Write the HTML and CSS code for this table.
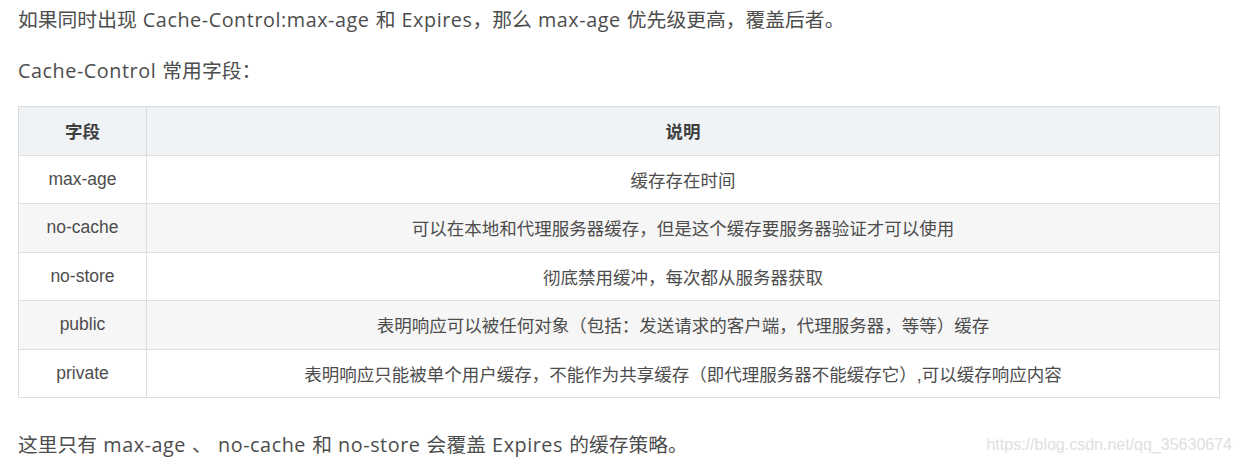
FILE: index.html
```html
<!DOCTYPE html>
<html lang="zh-CN">
<head>
<meta charset="utf-8">
<link rel="stylesheet" href="styles.css">
</head>
<body>
<main class="article">
  <p class="para">如果同时出现 <span class="latin">Cache-Control:max-age</span> 和 <span class="latin">Expires</span>，那么 <span class="latin">max-age</span> 优先级更高，覆盖后者。</p>
  <p class="para"><span class="latin">Cache-Control</span> 常用字段：</p>
  <table class="fields">
    <thead>
      <tr class="row"><th class="col-name">字段</th><th>说明</th></tr>
    </thead>
    <tbody>
      <tr class="row"><td>max-age</td><td>缓存存在时间</td></tr>
      <tr class="row alt"><td>no-cache</td><td>可以在本地和代理服务器缓存，但是这个缓存要服务器验证才可以使用</td></tr>
      <tr class="row"><td>no-store</td><td>彻底禁用缓冲，每次都从服务器获取</td></tr>
      <tr class="row alt"><td>public</td><td>表明响应可以被任何对象（包括：发送请求的客户端，代理服务器，等等）缓存</td></tr>
      <tr class="row"><td>private</td><td>表明响应只能被单个用户缓存，不能作为共享缓存（即代理服务器不能缓存它）,可以缓存响应内容</td></tr>
    </tbody>
  </table>
  <p class="para last">这里只有 <span class="latin">max-age</span> 、 <span class="latin">no-cache</span> 和 <span class="latin">no-store</span> 会覆盖 <span class="latin">Expires</span> 的缓存策略。</p>
  <span class="watermark">https://blog.csdn.net/qq_35630674</span>
</main>
</body>
</html>
```
FILE: styles.css
```css
html, body {
  margin: 0;
  padding: 0;
  background: #fff;
}
.article {
  position: relative;
  width: 1202px;
  padding-left: 18px;
  font-family: "Open Sans", "Noto Sans CJK SC", sans-serif;
  color: #4d4d4d;
}
.para {
  margin: 0 0 11px 0;
  font-size: 19.8px;
  line-height: 40px;
  white-space: nowrap;
  word-spacing: 1px;
}
.latin {
  letter-spacing: 0.55px;
}
.fields {
  margin-top: 15px;
  width: 1202px;
  border-collapse: collapse;
  font-family: "Liberation Sans", "Noto Sans CJK SC", sans-serif;
  font-size: 17.5px;
  color: #4d4d4d;
}
.fields th, .fields td {
  border: 1px solid #dddddd;
  text-align: center;
  padding: 0;
  height: 47.5px;
}
.fields th {
  background: #eff3f5;
  font-weight: bold;
  color: #3f3f3f;
}
.col-name {
  width: 127px;
}
.row.alt td {
  background: #f6f6f6;
}
.para.last {
  margin-top: 27px;
  margin-bottom: 0;
}
.watermark {
  position: absolute;
  right: -12px;
  bottom: 8px;
  font-family: "Liberation Sans", sans-serif;
  font-size: 16px;
  color: #e0e0e0;
  line-height: 24px;
}
```
